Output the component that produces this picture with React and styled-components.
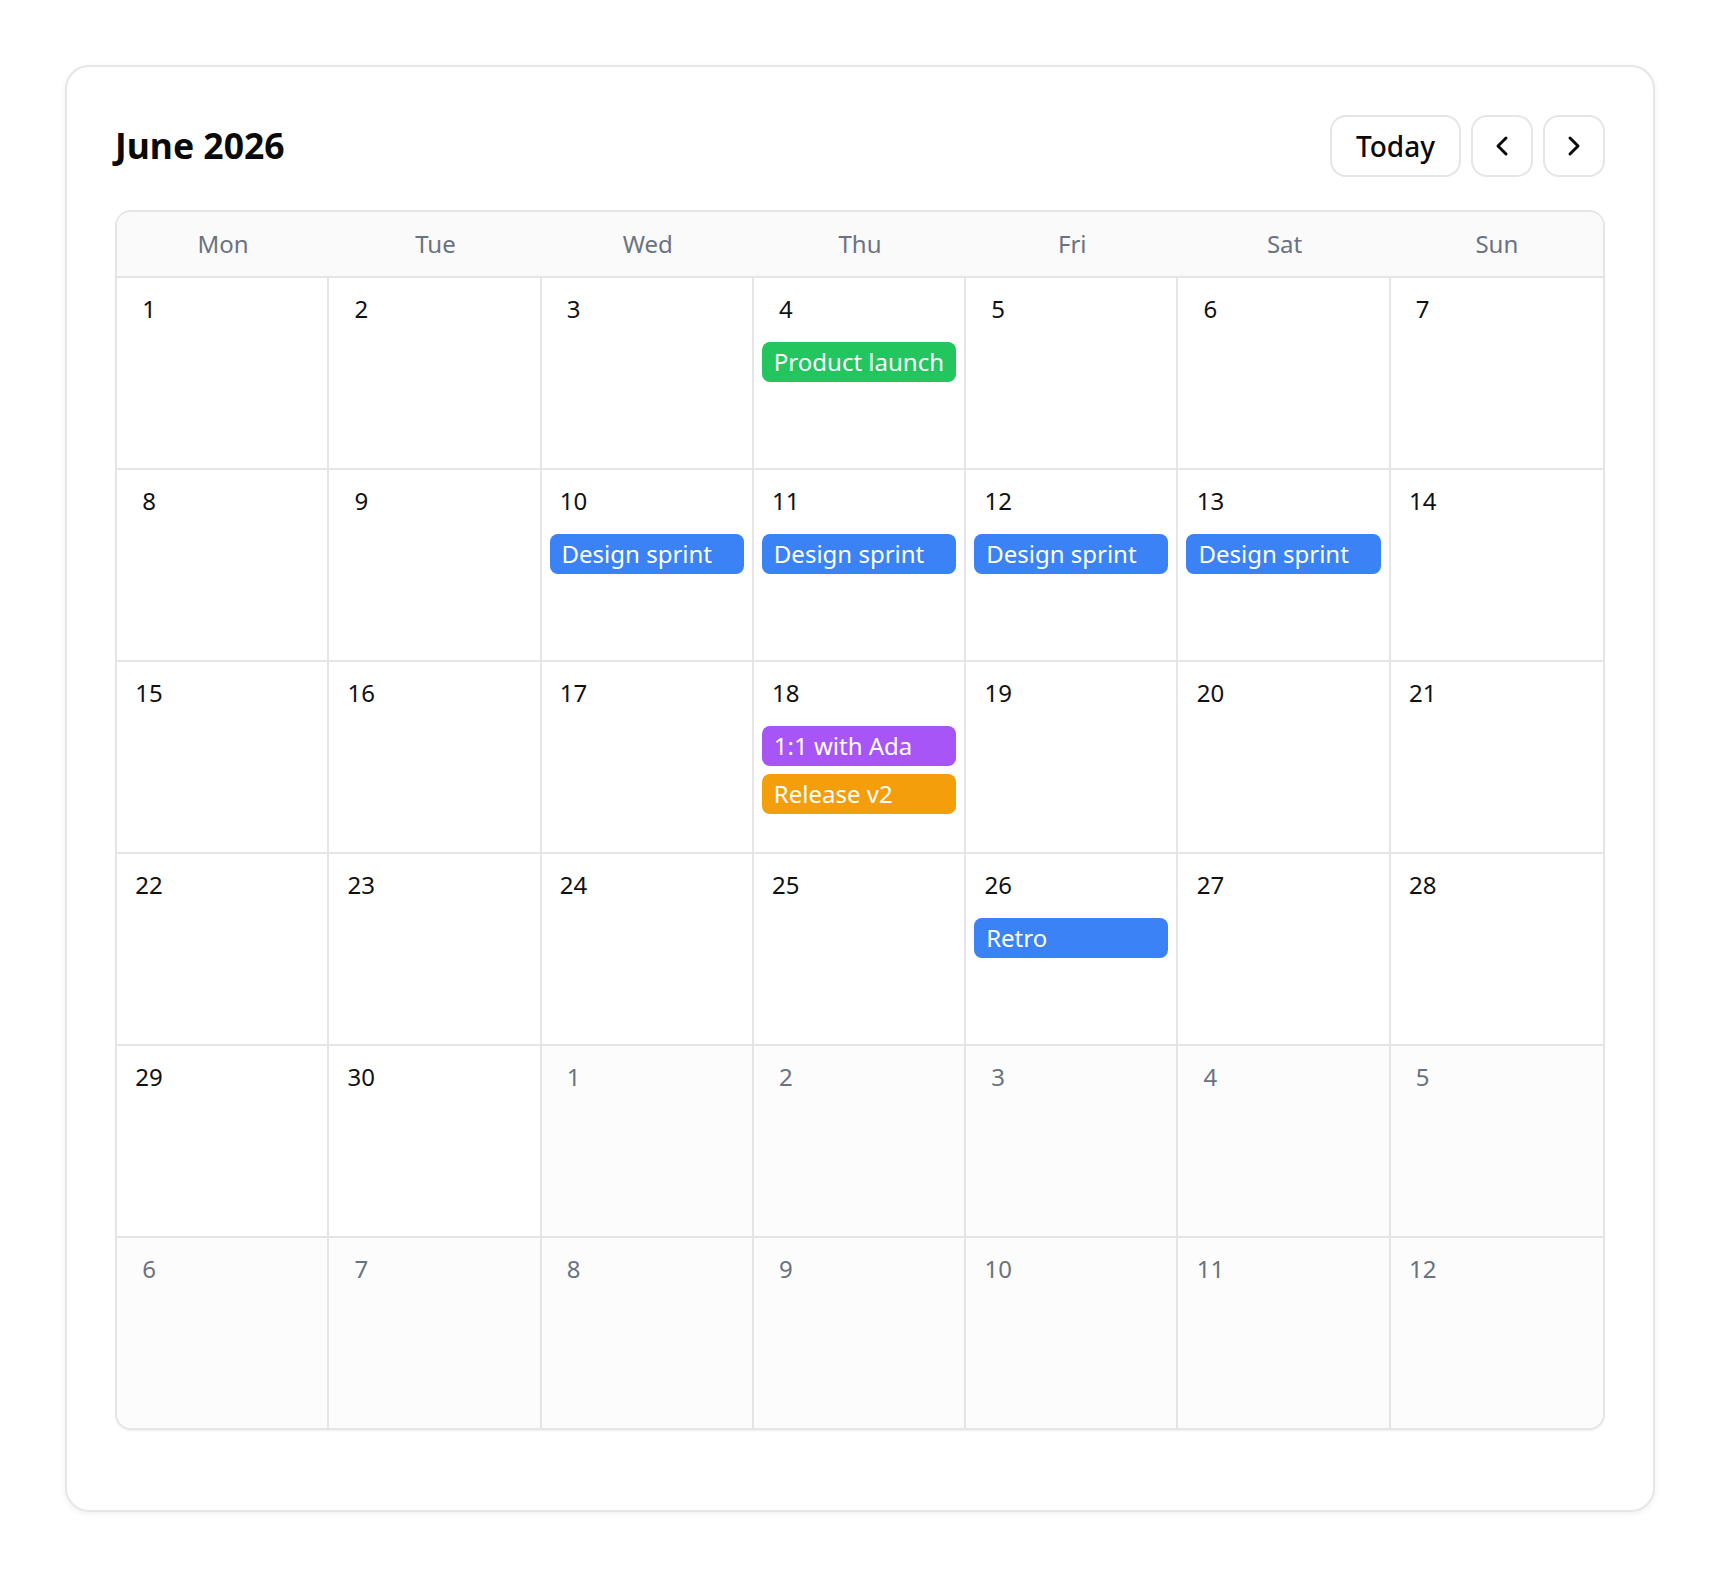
import React from 'react';
import styled, { createGlobalStyle } from 'styled-components';
import { ChevronLeft, ChevronRight } from 'lucide-react';

const GlobalStyle = createGlobalStyle`
  html, body { margin: 0; padding: 0; background: #ffffff; }
  body {
    font-family: "Noto Sans", "Open Sans", sans-serif;
    color: #111827;
    -webkit-font-smoothing: antialiased;
  }
  * { box-sizing: border-box; }
`;

const Page = styled.div`
  padding: 65px;
`;

const Card = styled.section`
  background: #ffffff;
  border: 2px solid #e6e6e6;
  border-radius: 24px;
  padding: 48px 48px 80px;
  box-shadow: 0 2px 6px rgba(0, 0, 0, 0.06);
`;

const Header = styled.header`
  display: flex;
  align-items: center;
  justify-content: space-between;
  height: 62px;
  margin-bottom: 33px;
`;

const Title = styled.h1`
  margin: 0;
  font-size: 35.5px;
  font-weight: 700;
  line-height: 1;
  color: #0a0a0a;
`;

const Nav = styled.div`
  display: flex;
  align-items: center;
  gap: 10px;
`;

const NavButton = styled.button`
  height: 62px;
  min-width: 62px;
  padding: ${(p) => (p.$icon ? '0' : '0 24px')};
  display: inline-flex;
  align-items: center;
  justify-content: center;
  background: #ffffff;
  border: 2px solid #e5e5e5;
  border-radius: 16px;
  font-family: inherit;
  font-size: 28px;
  font-weight: 500;
  color: #0a0a0a;
  cursor: pointer;
`;

const Calendar = styled.div`
  border: 2px solid #e5e5e5;
  border-radius: 16px;
  overflow: hidden;
  box-shadow: 0 1px 2px rgba(0, 0, 0, 0.06);
`;

const WeekHeader = styled.div`
  display: grid;
  grid-template-columns: repeat(7, 1fr);
  height: 64px;
  padding-bottom: 2px;
  background: #fafafa;
`;

const Weekday = styled.div`
  display: flex;
  align-items: center;
  justify-content: center;
  font-size: 24px;
  color: #6b7280;
`;

const Week = styled.div`
  display: grid;
  grid-template-columns: repeat(7, 1fr);
  height: 192px;
  border-top: 2px solid #e5e5e5;
`;

const Day = styled.div`
  padding: 8px;
  background: ${(p) => (p.$muted ? '#fcfcfc' : '#ffffff')};
  border-right: 2px solid #e5e5e5;
  min-width: 0;
  &:last-child {
    border-right: none;
  }
`;

const DayNum = styled.div`
  width: 48px;
  height: 44px;
  display: flex;
  align-items: center;
  justify-content: center;
  font-size: 24px;
  color: ${(p) => (p.$muted ? '#6b7280' : '#111111')};
`;

const Events = styled.div`
  margin-top: 12px;
  display: flex;
  flex-direction: column;
  gap: 8px;
`;

const EventChip = styled.div`
  height: 40px;
  line-height: 40px;
  padding: 0 12px;
  border-radius: 8px;
  background: ${(p) => p.$color};
  color: #ffffff;
  font-size: 24px;
  white-space: nowrap;
  overflow: hidden;
  text-overflow: ellipsis;
`;

const COLORS = {
  green: '#22c55e',
  blue: '#3b82f6',
  purple: '#a855f7',
  amber: '#f59e0b',
};

const EVENTS = {
  4: [{ title: 'Product launch', color: COLORS.green }],
  10: [{ title: 'Design sprint', color: COLORS.blue }],
  11: [{ title: 'Design sprint', color: COLORS.blue }],
  12: [{ title: 'Design sprint', color: COLORS.blue }],
  13: [{ title: 'Design sprint', color: COLORS.blue }],
  18: [
    { title: '1:1 with Ada', color: COLORS.purple },
    { title: 'Release v2', color: COLORS.amber },
  ],
  26: [{ title: 'Retro', color: COLORS.blue }],
};

const WEEKDAYS = ['Mon', 'Tue', 'Wed', 'Thu', 'Fri', 'Sat', 'Sun'];

function buildWeeks() {
  const cells = [];
  for (let d = 1; d <= 30; d++) cells.push({ day: d, muted: false });
  for (let d = 1; d <= 12; d++) cells.push({ day: d, muted: true });
  const weeks = [];
  for (let i = 0; i < cells.length; i += 7) weeks.push(cells.slice(i, i + 7));
  return weeks;
}

export default function App() {
  const weeks = buildWeeks();
  return (
    <>
      <GlobalStyle />
      <Page>
        <Card>
          <Header>
            <Title>June 2026</Title>
            <Nav>
              <NavButton>Today</NavButton>
              <NavButton $icon aria-label="Previous month">
                <ChevronLeft size={32} strokeWidth={2.25} />
              </NavButton>
              <NavButton $icon aria-label="Next month">
                <ChevronRight size={32} strokeWidth={2.25} />
              </NavButton>
            </Nav>
          </Header>
          <Calendar>
            <WeekHeader>
              {WEEKDAYS.map((w) => (
                <Weekday key={w}>{w}</Weekday>
              ))}
            </WeekHeader>
            {weeks.map((week, wi) => (
              <Week key={wi}>
                {week.map((cell, ci) => {
                  const events = !cell.muted ? EVENTS[cell.day] : null;
                  return (
                    <Day key={ci} $muted={cell.muted}>
                      <DayNum $muted={cell.muted}>{cell.day}</DayNum>
                      {events && (
                        <Events>
                          {events.map((e, ei) => (
                            <EventChip key={ei} $color={e.color}>
                              {e.title}
                            </EventChip>
                          ))}
                        </Events>
                      )}
                    </Day>
                  );
                })}
              </Week>
            ))}
          </Calendar>
        </Card>
      </Page>
    </>
  );
}
